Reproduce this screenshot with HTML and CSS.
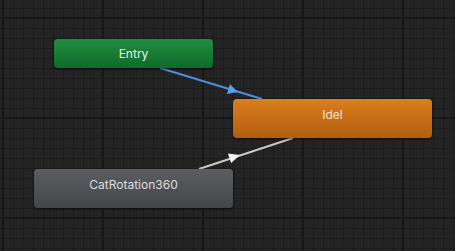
FILE: index.html
```html
<!DOCTYPE html>
<html>
<head>
<meta charset="utf-8">
<link rel="stylesheet" href="styles.css">
</head>
<body>
<div class="graph">
  <svg class="links" width="455" height="251" viewBox="0 0 455 251">
    <line x1="160" y1="68" x2="262" y2="99" stroke="#4d8fdc" stroke-width="2"/>
    <polygon points="238,92 226.9,93.9 229.9,84.3" fill="#5b9ef0"/>
    <line x1="199" y1="169" x2="293" y2="138" stroke="#c9c9c9" stroke-width="2"/>
    <polygon points="240,155 231.1,162.9 227.9,153.4" fill="#f2f2f2"/>
  </svg>
  <div class="node entry">Entry</div>
  <div class="node idle">Idel</div>
  <div class="node state">CatRotation360</div>
</div>
</body>
</html>
```
FILE: styles.css
```css
html, body {
  margin: 0;
  padding: 0;
  width: 455px;
  height: 251px;
  overflow: hidden;
}
.graph {
  position: relative;
  width: 455px;
  height: 251px;
  background-color: #242424;
  background-image:
    linear-gradient(to right, #171717 2px, transparent 2px),
    linear-gradient(to bottom, #171717 2px, transparent 2px),
    linear-gradient(to right, #1c1c1c 1px, transparent 1px),
    linear-gradient(to bottom, #1c1c1c 1px, transparent 1px);
  background-size: 100px 100px, 100px 100px, 10px 10px, 10px 10px;
  background-position: 2px 0, 0 17px, 3px 0, 0 8px;
  font-family: Inter, "Noto Sans", sans-serif;
}
.links {
  position: absolute;
  left: 0;
  top: 0;
}
.node {
  position: absolute;
  display: flex;
  align-items: center;
  justify-content: center;
  border-radius: 4px;
  font-size: 12px;
  color: #e6e6e6;
  box-shadow: 0 1px 3px rgba(0,0,0,0.6);
}
.entry {
  left: 54px;
  top: 39px;
  width: 159px;
  height: 29px;
  background: linear-gradient(to bottom, #228c3e, #0f6b2b);
  color: #e4eee6;
}
.idle {
  left: 233px;
  top: 99px;
  width: 199px;
  height: 39px;
  background: linear-gradient(to bottom, #da7f1f, #b15e10);
  color: #f4e6d8;
  padding-bottom: 9px;
  box-sizing: border-box;
}
.state {
  left: 34px;
  top: 169px;
  width: 199px;
  height: 39px;
  background: linear-gradient(to bottom, #5c5d60, #45464a);
  color: #dcdcdc;
  padding-bottom: 9px;
  box-sizing: border-box;
}
```
